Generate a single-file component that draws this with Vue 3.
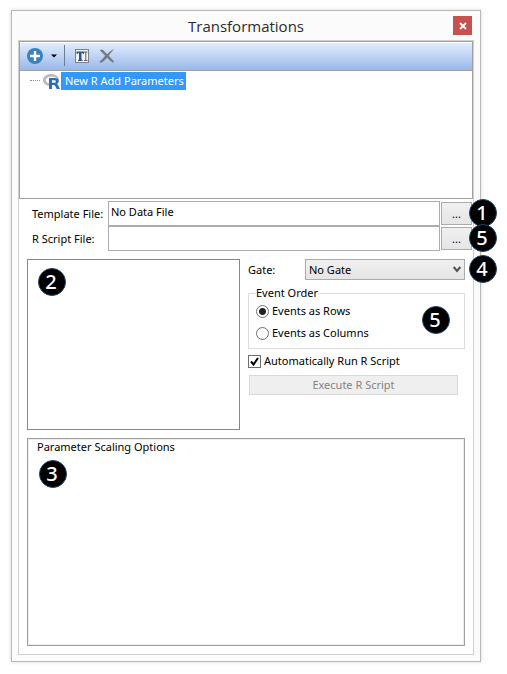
<template>
    <div class="page">
        <main class="window">
            <header class="title-bar">
                <h1 class="title">Transformations</h1>
                <button class="close" aria-label="Close">
                    <svg viewBox="0 0 8 8">
                        <path d="M1 1l6 6M7 1l-6 6" />
                    </svg>
                </button>
            </header>

            <div class="client">
                <!-- transformation tree -->
                <section class="tree-panel">
                    <div class="toolbar">
                        <button class="tool" aria-label="Add">
                            <svg width="16" height="16" viewBox="0 0 16 16">
                                <circle cx="8" cy="8" r="8" fill="#3a80c4" />
                                <path d="M8 3v10M3 8h10" stroke="#fff" stroke-width="2.4" />
                            </svg>
                        </button>
                        <button class="tool arrow" aria-label="Add menu">
                            <svg width="6" height="4" viewBox="0 0 6 4">
                                <path d="M0 0.5h6l-3 3z" fill="#000" />
                            </svg>
                        </button>
                        <span class="separator"></span>
                        <button class="tool rename" aria-label="Rename">
                            <svg width="14" height="14" viewBox="0 0 14 14">
                                <rect x="0.5" y="0.5" width="13" height="13" fill="#f4f6fa" stroke="#7d7f86" />
                                <path d="M1.500 2.500H9v2.500H8l-.5-1H6.500v6.500l1 .5v1H3v-1l1-.5V4H3l-.5 1h-1z" fill="#34508f" />
                                <path d="M9 3h3.500M9 11.500h3.500M10.800 3v8.500" fill="none" stroke="#5a5f70" />
                            </svg>
                        </button>
                        <button class="tool delete" aria-label="Delete">
                            <svg width="16" height="14" viewBox="0 0 16 14">
                                <path d="M1 1.500C1.500.3 3 0 4 1l4.200 4.200C10 3.200 12.500 1 15 0 13.500 2 11.500 4 9.800 6.700L15 12.500l-1 1.200c-2-1-4-3-5.800-4.900C6.500 10.500 4.500 12.500 2 14L.5 12.700C2.500 11 4.500 9 6.200 6.700z" fill="#75787d" />
                            </svg>
                        </button>
                    </div>
                    <div class="tree">
                        <span class="branch"></span>
                        <svg class="r-logo" width="17" height="15" viewBox="0 0 17 15">
                            <path d="M8 0C3.500 0 0 2.600 0 6s2.500 5.600 6.500 6V9.500C4.500 9.200 3 8 3 6.300 3 4.200 5.400 2.800 8.700 2.800S14 4 14 6h2C16 2.500 12.500 0 8 0z" fill="#bcbdc0" />
                            <path d="M6 4h6c2.500 0 3.800 1.100 3.800 3 0 1.500-.8 2.400-2 2.800.6.300.9.700 1.300 1.400L17 15h-3.300l-1.500-3c-.4-.8-.7-1-1.400-1H9v4H6zM9 6.300v2.500h2.300c1 0 1.500-.4 1.500-1.200s-.5-1.300-1.500-1.300z" fill="#2f6eb5" fill-rule="evenodd" />
                        </svg>
                        <span class="node">New R Add Parameters</span>
                    </div>
                </section>

                <!-- files -->
                <section class="files">
                    <div v-for="file in files" :key="file.id" class="file-row">
                        <label :for="file.id">{{ file.label }}</label>
                        <input :id="file.id" v-model="file.value" type="text" class="file-input" />
                        <button class="browse" :aria-label="'Browse ' + file.label">...</button>
                        <span class="badge outside">{{ file.badge }}</span>
                    </div>
                </section>

                <section class="options">
                    <div class="list-box">
                        <span class="badge">2</span>
                    </div>

                    <div class="settings">
                        <div class="gate-row">
                            <label for="gate">Gate:</label>
                            <div class="select-wrap">
                                <select id="gate" v-model="gate">
                                    <option>No Gate</option>
                                </select>
                                <svg class="chevron" width="8" height="7" viewBox="0 0 8 7">
                                    <path d="M0.700 1l3.300 4 3.300-4" fill="none" stroke="#505050" stroke-width="2" />
                                </svg>
                            </div>
                            <span class="badge outside gate-badge">4</span>
                        </div>

                        <fieldset class="order">
                            <legend>Event Order</legend>
                            <div class="choices">
                                <label class="choice">
                                    <input v-model="order" type="radio" name="order" value="rows" />
                                    Events as Rows
                                </label>
                                <label class="choice">
                                    <input v-model="order" type="radio" name="order" value="columns" />
                                    Events as Columns
                                </label>
                            </div>
                            <span class="badge order-badge">5</span>
                        </fieldset>

                        <label class="auto-run">
                            <span class="check">
                                <input v-model="autoRun" type="checkbox" />
                                <svg v-if="autoRun" viewBox="0 0 9 9">
                                    <path d="M1 4.500l2.500 3L8 1" />
                                </svg>
                            </span>
                            Automatically Run R Script
                        </label>

                        <button class="execute" disabled>Execute R Script</button>
                    </div>
                </section>

                <section class="scaling">
                    <h2>Parameter Scaling Options</h2>
                    <span class="badge">3</span>
                </section>
            </div>
        </main>
    </div>
</template>

<script setup>
import { ref } from "vue";

const files = ref([
    { id: "template-file", label: "Template File:", value: "No Data File", badge: 1 },
    { id: "script-file", label: "R Script File:", value: "", badge: 5 },
]);

const gate = ref("No Gate");
const order = ref("rows");
const autoRun = ref(true);
</script>

<style>
body {
    background: #fff;
}
</style>

<style scoped>
* {
    box-sizing: border-box;
}

.page {
    padding: 10px 26px 12px 11px;
    font-family: "Noto Sans", "Open Sans", sans-serif;
    font-size: 11px;
    line-height: 16px;
    color: #000;
}

button,
input,
select {
    margin: 0;
    font: inherit;
    color: inherit;
}

/* window frame */
.window {
    padding: 0 6px 6px;
    border: 1px solid #b9b9b9;
    background: #fbfbfb;
    box-shadow: 0 0 4px rgba(0, 0, 0, 0.16);
}

.title-bar {
    display: grid;
    grid-template-columns: 1fr auto 1fr;
    align-items: center;
    height: 29px;
}

.title {
    grid-column: 2;
    margin: 0;
    font-family: "Open Sans", sans-serif;
    font-size: 15px;
    font-weight: 400;
    line-height: 20px;
    color: #2b2b2b;
}

.close {
    justify-self: end;
    display: flex;
    align-items: center;
    justify-content: center;
    width: 19px;
    height: 19px;
    margin-right: 2px;
    padding: 0;
    border: none;
    background: #c75050;
}

.close svg {
    width: 8px;
    height: 8px;
    stroke: #fff;
    stroke-width: 1.8;
}

.client {
    border: 1px solid #d0d0d0;
    background: #fff;
}

/* tree */
.tree-panel {
    border: 1px solid #a0a0a0;
}

.toolbar {
    display: flex;
    align-items: center;
    height: 29px;
    padding: 0 7px 2px;
    border-top: 1px solid #fff;
    border-bottom: 1px solid #a0a0a8;
    background: linear-gradient(#e1edfe, #99b8e8);
}

.tool {
    display: flex;
    padding: 0;
    border: none;
    background: none;
}

.arrow {
    margin-left: 8px;
}

.separator {
    width: 1px;
    height: 21px;
    margin-left: 7px;
    background: #6a7c99;
}

.rename {
    margin-left: 10px;
}

.delete {
    margin-left: 10px;
}

.tree {
    display: flex;
    align-items: flex-start;
    height: 127px;
    padding: 1px 10px;
}

.branch {
    width: 10px;
    margin-top: 8px;
    border-top: 1px dotted #909090;
}

.r-logo {
    margin: 2px 1px 0 3px;
}

.node {
    height: 18px;
    padding: 0 1px 0 3px;
    border: 1px dotted #d07020;
    background: #3399ff;
    color: #fff;
}

/* files */
.files {
    padding: 2px 1px 8px 13px;
}

.file-row {
    position: relative;
    display: grid;
    grid-template-columns: 75px 1fr 31px;
    align-items: center;
    column-gap: 1px;
    height: 25px;
}

.file-input {
    width: 100%;
    height: 25px;
    padding: 0 2px 4px;
    border: 1px solid #abadb3;
    border-radius: 0;
    background: #fff;
}

.browse {
    height: 23px;
    padding: 0;
    border: 1px solid #acacac;
    background: linear-gradient(#f0f0f0, #e5e5e5);
}

/* callouts */
.badge {
    display: flex;
    align-items: center;
    justify-content: center;
    width: 28px;
    height: 28px;
    padding-right: 2px;
    border: 1px solid #1f4468;
    border-radius: 50%;
    background: #000;
    color: #fff;
    font-size: 20px;
    font-weight: 500;
    line-height: 20px;
}

.outside {
    position: absolute;
    top: -2px;
    right: -25px;
}

/* options */
.options {
    display: grid;
    grid-template-columns: 213fr 217fr;
    gap: 8px;
    padding: 0 8px;
}

.list-box {
    height: 171px;
    padding: 8px 10px;
    border: 1px solid #828790;
}

.gate-row {
    position: relative;
    display: grid;
    grid-template-columns: 57px 1fr;
    align-items: center;
    height: 21px;
}

.gate-badge {
    top: -4px;
    right: -32px;
}

.select-wrap {
    position: relative;
}

select {
    display: block;
    width: 100%;
    height: 21px;
    padding: 0 3px;
    border: 1px solid #acacac;
    border-radius: 0;
    background: linear-gradient(#f0f0f0, #e5e5e5);
    appearance: none;
}

.chevron {
    position: absolute;
    top: 7px;
    right: 4px;
    pointer-events: none;
}

.order {
    position: relative;
    height: 64px;
    margin: 5px 0 0;
    padding: 0 7px;
    border: 1px solid #dcdcdc;
}

.order legend {
    padding: 0;
}

.choices {
    display: grid;
    grid-auto-rows: 22px;
    margin-top: -1px;
}

.choice {
    display: flex;
    align-items: center;
    gap: 3px;
}

.choice input {
    width: 13px;
    height: 13px;
    border: 1px solid #707070;
    border-radius: 50%;
    background: #fff;
    appearance: none;
}

.choice input:checked {
    background: radial-gradient(circle, #212121 3px, #fff 4px);
}

.order-badge {
    position: absolute;
    top: 5px;
    right: 14px;
}

.auto-run {
    display: flex;
    align-items: center;
    gap: 3px;
    height: 16px;
    margin-top: 4px;
}

.check {
    position: relative;
    display: flex;
}

.check input {
    width: 13px;
    height: 13px;
    border: 1px solid #707070;
    background: #fff;
    appearance: none;
}

.check svg {
    position: absolute;
    inset: 2px;
    fill: none;
    stroke: #000;
    stroke-width: 2;
    pointer-events: none;
}

.execute {
    display: block;
    width: calc(100% - 8px);
    height: 20px;
    margin: 6px 7px 0 1px;
    padding: 0;
    border: 1px solid #d9d9d9;
    background: #efefef;
    color: #838383;
}

/* scaling */
.scaling {
    height: 208px;
    margin: 8px;
    padding: 0 9px;
    border: 1px solid #a0a0a0;
    box-shadow: inset 0 0 0 1px #ececec;
}

.scaling h2 {
    margin: 0 0 5px;
    font-size: 11px;
    font-weight: 400;
}

.scaling .badge {
    margin-left: 2px;
}
</style>
